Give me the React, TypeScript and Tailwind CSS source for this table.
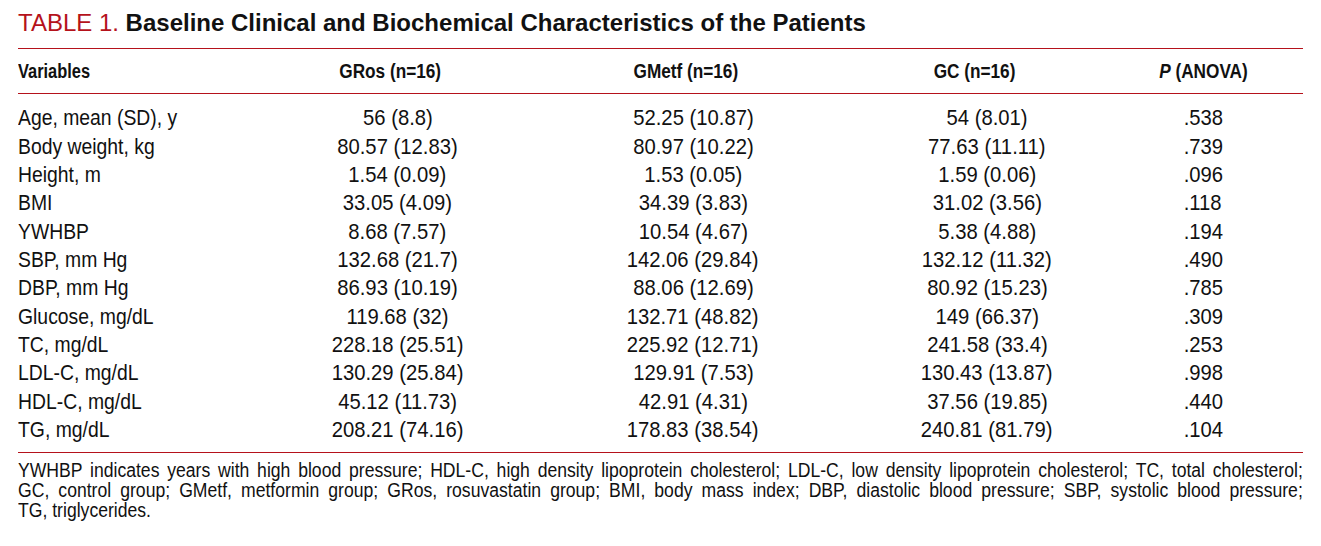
const rows: [string, string, string, string, string][] = [
  ["Age, mean (SD), y", "56 (8.8)", "52.25 (10.87)", "54 (8.01)", ".538"],
  ["Body weight, kg", "80.57 (12.83)", "80.97 (10.22)", "77.63 (11.11)", ".739"],
  ["Height, m", "1.54 (0.09)", "1.53 (0.05)", "1.59 (0.06)", ".096"],
  ["BMI", "33.05 (4.09)", "34.39 (3.83)", "31.02 (3.56)", ".118"],
  ["YWHBP", "8.68 (7.57)", "10.54 (4.67)", "5.38 (4.88)", ".194"],
  ["SBP, mm Hg", "132.68 (21.7)", "142.06 (29.84)", "132.12 (11.32)", ".490"],
  ["DBP, mm Hg", "86.93 (10.19)", "88.06 (12.69)", "80.92 (15.23)", ".785"],
  ["Glucose, mg/dL", "119.68 (32)", "132.71 (48.82)", "149 (66.37)", ".309"],
  ["TC, mg/dL", "228.18 (25.51)", "225.92 (12.71)", "241.58 (33.4)", ".253"],
  ["LDL-C, mg/dL", "130.29 (25.84)", "129.91 (7.53)", "130.43 (13.87)", ".998"],
  ["HDL-C, mg/dL", "45.12 (11.73)", "42.91 (4.31)", "37.56 (19.85)", ".440"],
  ["TG, mg/dL", "208.21 (74.16)", "178.83 (38.54)", "240.81 (81.79)", ".104"],
]

// no condensed face installed, so squeeze Liberation Sans horizontally
const Num = ({children}: {children: React.ReactNode}) => (
  <span className="inline-block scale-x-[0.92] origin-center whitespace-nowrap">{children}</span>
)

export default function App() {
  return (
    <div className="w-[1321px] h-[546px] overflow-hidden bg-white px-[18px] text-[#111] font-['Liberation_Sans',Arial,sans-serif]">
      <div className="h-[49px] border-b border-[#b5121b] pt-[9px] text-[24px] leading-[28px] whitespace-nowrap">
        <span className="text-[#b5121b]">TABLE 1. </span>
        <span className="font-bold">Baseline Clinical and Biochemical Characteristics of the Patients</span>
      </div>

      <div className="flex h-[45px] items-center border-b border-[#b5121b] font-bold text-[20px]">
        <div className="w-[232px]">
          <span className="inline-block origin-left scale-x-[0.82]">Variables</span>
        </div>
        <div className="w-[295px] text-center pr-[14px]">
          <span className="inline-block scale-x-[0.86] whitespace-nowrap">GRos (n=16)</span>
        </div>
        <div className="w-[296px] text-center pr-[14px]">
          <span className="inline-block scale-x-[0.86] whitespace-nowrap">GMetf (n=16)</span>
        </div>
        <div className="w-[292px] text-center pr-[24px]">
          <span className="inline-block scale-x-[0.86] whitespace-nowrap">GC (n=16)</span>
        </div>
        <div className="w-[140px] text-center">
          <span className="inline-block scale-x-[0.86] whitespace-nowrap"><i>P</i> (ANOVA)</span>
        </div>
      </div>

      <div className="pt-[10px] pb-[8px] border-b border-[#b5121b] text-[22px]">
        {rows.map((r) => (
          <div key={r[0]} className="flex h-[28.35px] items-center leading-none">
            <div className="w-[232px] whitespace-nowrap">
              <span className="inline-block origin-left scale-x-[0.88]">{r[0]}</span>
            </div>
            <div className="w-[295px] text-center"><Num>{r[1]}</Num></div>
            <div className="w-[296px] text-center"><Num>{r[2]}</Num></div>
            <div className="w-[292px] text-center"><Num>{r[3]}</Num></div>
            <div className="w-[140px] text-center"><Num>{r[4]}</Num></div>
          </div>
        ))}
      </div>

      <div className="w-[1460px] origin-left scale-x-[0.88] pt-[7px] text-[20px] leading-[20px]">
        <div className="text-justify [text-align-last:justify]">
          YWHBP indicates years with high blood pressure; HDL-C, high density lipoprotein cholesterol; LDL-C, low density lipoprotein cholesterol; TC, total cholesterol;
        </div>
        <div className="text-justify [text-align-last:justify]">
          GC, control group; GMetf, metformin group; GRos, rosuvastatin group; BMI, body mass index; DBP, diastolic blood pressure; SBP, systolic blood pressure;
        </div>
        <div>TG, triglycerides.</div>
      </div>
    </div>
  )
}
